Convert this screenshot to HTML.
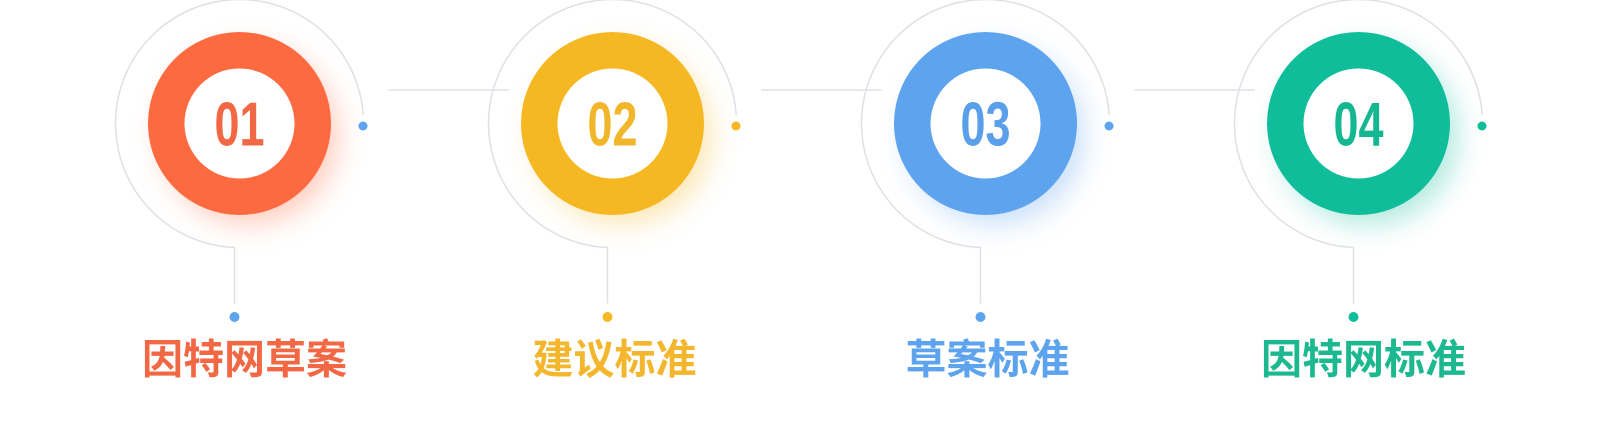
<!DOCTYPE html>
<html><head><meta charset="utf-8">
<style>
html,body{margin:0;padding:0;background:#fff;width:1612px;height:439px;overflow:hidden}
svg{display:block}
.n{font-family:"Liberation Sans",sans-serif;font-weight:bold;font-size:62px}
.t{font-family:"Liberation Sans","Noto Sans CJK SC",sans-serif;font-weight:bold;font-size:41px}
</style></head><body>
<svg width="1612" height="439" viewBox="0 0 1612 439" xmlns="http://www.w3.org/2000/svg">
<defs>
<filter id="g" x="-50%" y="-50%" width="200%" height="200%"><feGaussianBlur stdDeviation="14"/></filter>
<g id="base">
  <path d="M-5,123.9 A124,124 0 1 1 123.7,-8.6" fill="none" stroke="#dfe0e6" stroke-width="1.5"/>
  <line x1="-5" y1="123.9" x2="-5" y2="180" stroke="#dfe0e6" stroke-width="1.5"/>
</g>
</defs>
<g transform="translate(239.5,123.5)">
  <use href="#base"/>
  <circle cx="10" cy="12" r="88" fill="#fe6a40" opacity="0.35" filter="url(#g)"/>
  <circle r="91.5" fill="#fe6a40"/>
  <circle r="55" fill="#fff"/>
  <text class="n" x="0" y="22" text-anchor="middle" fill="#f26844" textLength="50" lengthAdjust="spacingAndGlyphs">01</text>
  <circle cx="123.5" cy="2.5" r="4.5" fill="#5ea3ee"/>
  <circle cx="-5" cy="193.5" r="5" fill="#5ea3ee"/>
  <text class="t" x="5" y="250" text-anchor="middle" fill="#f26844">因特网草案</text>
</g>
<g transform="translate(612.5,123.5)">
  <line x1="-224" y1="-33.5" x2="-104" y2="-33.5" stroke="#dfe0e6" stroke-width="1.5"/>
  <use href="#base"/>
  <circle cx="10" cy="12" r="88" fill="#f5b822" opacity="0.35" filter="url(#g)"/>
  <circle r="91.5" fill="#f5b822"/>
  <circle r="55" fill="#fff"/>
  <text class="n" x="0" y="22" text-anchor="middle" fill="#f1b62a" textLength="50" lengthAdjust="spacingAndGlyphs">02</text>
  <circle cx="123.5" cy="2.5" r="4.5" fill="#f5b822"/>
  <circle cx="-5" cy="193.5" r="5" fill="#f5b822"/>
  <text class="t" x="2" y="250" text-anchor="middle" fill="#f3b62c">建议标准</text>
</g>
<g transform="translate(985.5,123.5)">
  <line x1="-224" y1="-33.5" x2="-104" y2="-33.5" stroke="#dfe0e6" stroke-width="1.5"/>
  <use href="#base"/>
  <circle cx="10" cy="12" r="88" fill="#5ea3ee" opacity="0.35" filter="url(#g)"/>
  <circle r="91.5" fill="#5ea3ee"/>
  <circle r="55" fill="#fff"/>
  <text class="n" x="0" y="22" text-anchor="middle" fill="#5a9fe9" textLength="50" lengthAdjust="spacingAndGlyphs">03</text>
  <circle cx="123.5" cy="2.5" r="4.5" fill="#5ea3ee"/>
  <circle cx="-5" cy="193.5" r="5" fill="#5ea3ee"/>
  <text class="t" x="2" y="250" text-anchor="middle" fill="#5ea3ee">草案标准</text>
</g>
<g transform="translate(1358.5,123.5)">
  <line x1="-224" y1="-33.5" x2="-104" y2="-33.5" stroke="#dfe0e6" stroke-width="1.5"/>
  <use href="#base"/>
  <circle cx="10" cy="12" r="88" fill="#0fbd9a" opacity="0.35" filter="url(#g)"/>
  <circle r="91.5" fill="#0fbd9a"/>
  <circle r="55" fill="#fff"/>
  <text class="n" x="0" y="22" text-anchor="middle" fill="#14b792" textLength="50" lengthAdjust="spacingAndGlyphs">04</text>
  <circle cx="123.5" cy="2.5" r="4.5" fill="#0fbd9a"/>
  <circle cx="-5" cy="193.5" r="5" fill="#0fbd9a"/>
  <text class="t" x="5" y="250" text-anchor="middle" fill="#1cb890">因特网标准</text>
</g>
</svg>
</body></html>
